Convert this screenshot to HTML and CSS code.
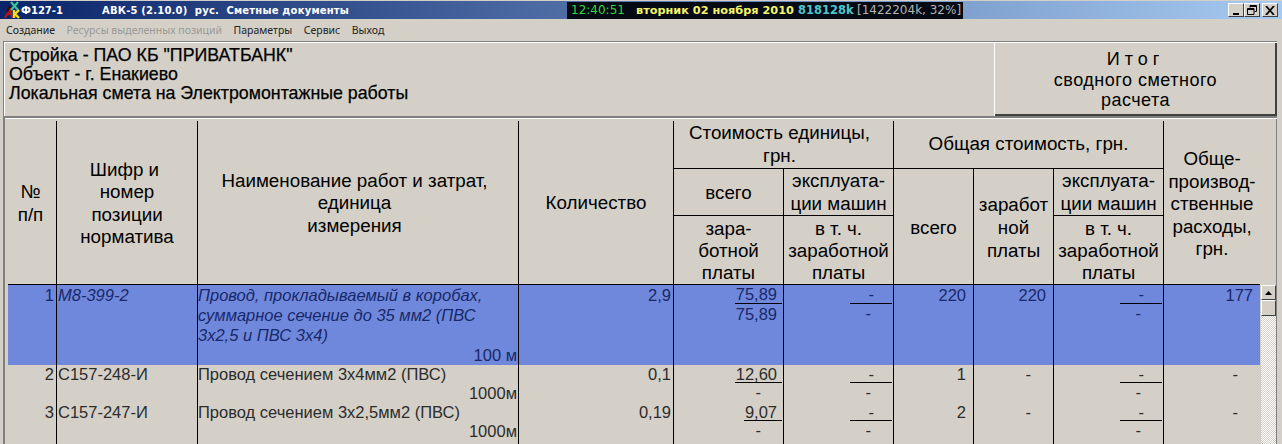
FILE: index.html
```html
<!DOCTYPE html>
<html lang="ru">
<head>
<meta charset="utf-8">
<title>АВК-5 Сметные документы</title>
<link rel="stylesheet" href="styles.css">
</head>
<body>
<div class="window">
  <header class="titlebar">
    <svg class="logo" width="17" height="18" viewBox="0 0 17 18">
      <path d="M1 17 L6 7 L8 7 L10 17 L8 17 L7.500 14 L5 14 L3 17 Z" fill="#b01818"/>
      <path d="M4 11 L7 5" stroke="#3a0a0a" stroke-width="2"/>
      <path d="M8 1 L15 9 M15 1 L8 9" stroke="#35c59a" stroke-width="2.200"/>
      <path d="M11 9 V17 M16 9 L12 13 L16 17" fill="none" stroke="#f5dc1e" stroke-width="2.400"/>
    </svg>
    <span class="form-id">Ф127-1</span>
    <span class="app-name">АВК-5 (2.10.0)&nbsp; рус.&nbsp; Сметные документы</span>
    <div class="clock">
      <span class="clock-time">12:40:51</span>
      <span class="clock-date">вторник 02 ноября 2010</span>
      <span class="clock-mem">818128k</span>
      <span class="clock-total">[1422204k, 32%]</span>
    </div>
    <div class="winbtns">
      <div class="winbtn">
        <svg width="9" height="9" viewBox="0 0 9 9"><path d="M1 7h6v2H1z" fill="#000"/></svg>
      </div>
      <div class="winbtn">
        <svg width="10" height="10" viewBox="0 0 10 10"><path d="M3 .5h6.5v6H7.5M3 .5v2M3 1.5h6.5M.5 3.5h6.500v6H.5zM.5 4.500h6.500" fill="none" stroke="#000"/></svg>
      </div>
      <div class="winbtn winbtn-close">
        <svg width="10" height="9" viewBox="0 0 10 9"><path d="M1 0l8 9M9 0L1 9" stroke="#000" stroke-width="1.800"/></svg>
      </div>
    </div>
  </header>

  <nav class="menu">
    <span class="menu-item">Создание</span>
    <span class="menu-item menu-disabled">Ресурсы выделенных позиций</span>
    <span class="menu-item">Параметры</span>
    <span class="menu-item">Сервис</span>
    <span class="menu-item">Выход</span>
  </nav>

  <section class="info">
    <div class="info-text">
      <div>Стройка - ПАО КБ "ПРИВАТБАНК"</div>
      <div>Объект - г. Енакиево</div>
      <div>Локальная смета на Электромонтажные работы</div>
    </div>
    <button class="total-btn" type="button">
      <span class="total-head">Итог</span>
      <span>сводного сметного</span>
      <span>расчета</span>
    </button>
  </section>

  <section class="frame">
    <table class="sheet">
      <colgroup>
        <col class="c1"><col class="c2"><col class="c3"><col class="c4"><col class="c5">
        <col class="c6"><col class="c7"><col class="c8"><col class="c9"><col class="c10">
      </colgroup>
      <thead>
        <tr class="h-a">
          <th rowspan="3" class="tall th-num">№<br>п/п</th>
          <th rowspan="3" class="tall">Шифр и&nbsp;<br>номер<br>позиции<br>норматива</th>
          <th rowspan="3" class="tall th-name">Наименование работ и затрат,<br>единица<br>измерения</th>
          <th rowspan="3" class="tall">Количество</th>
          <th colspan="2" class="th-unit">Стоимость единицы,<br>грн.</th>
          <th colspan="3">Общая стоимость, грн.</th>
          <th rowspan="3" class="last th-over">Обще-<br>производ-<br>ственные<br>расходы,<br>грн.</th>
        </tr>
        <tr class="h-b">
          <th>всего</th>
          <th>эксплуата-<br>ции машин</th>
          <th rowspan="2" class="tall">всего</th>
          <th rowspan="2" class="tall">заработ<br>ной<br>платы</th>
          <th>эксплуата-<br>ции машин</th>
        </tr>
        <tr class="h-c">
          <th>зара-<br>ботной<br>платы</th>
          <th>в т. ч.<br>заработной<br>платы</th>
          <th>в т. ч.<br>заработной<br>платы</th>
        </tr>
      </thead>
      <tbody>
        <tr class="row-sel">
          <td class="num">1</td>
          <td class="code">М8-399-2</td>
          <td class="name">Провод, прокладываемый в коробах, суммарное сечение до 35 мм2 (ПВС 3х2,5 и ПВС 3х4)<div class="unit">100 м</div></td>
          <td class="qty">2,9</td>
          <td><div class="frac"><span class="frac-top">75,89</span><span class="frac-bot">75,89</span></div></td>
          <td><div class="frac"><span class="frac-top frac-dash">-</span><span class="frac-bot-dash">-</span></div></td>
          <td class="val">220</td>
          <td class="val">220</td>
          <td><div class="frac"><span class="frac-top frac-dash">-</span><span class="frac-bot-dash">-</span></div></td>
          <td class="val last">177</td>
        </tr>
        <tr class="row">
          <td class="num">2</td>
          <td class="code">С157-248-И</td>
          <td class="name">Провод сечением 3х4мм2 (ПВС)<div class="unit">1000м</div></td>
          <td class="qty">0,1</td>
          <td><div class="frac"><span class="frac-top">12,60</span><span class="frac-bot-dash">-</span></div></td>
          <td><div class="frac"><span class="frac-top frac-dash">-</span><span class="frac-bot-dash">-</span></div></td>
          <td class="val">1</td>
          <td class="dash">-</td>
          <td><div class="frac"><span class="frac-top frac-dash">-</span><span class="frac-bot-dash">-</span></div></td>
          <td class="dash last">-</td>
        </tr>
        <tr class="row">
          <td class="num">3</td>
          <td class="code">С157-247-И</td>
          <td class="name">Провод сечением 3х2,5мм2 (ПВС)<div class="unit">1000м</div></td>
          <td class="qty">0,19</td>
          <td><div class="frac"><span class="frac-top">9,07</span><span class="frac-bot-dash">-</span></div></td>
          <td><div class="frac"><span class="frac-top frac-dash">-</span><span class="frac-bot-dash">-</span></div></td>
          <td class="val">2</td>
          <td class="dash">-</td>
          <td><div class="frac"><span class="frac-top frac-dash">-</span><span class="frac-bot-dash">-</span></div></td>
          <td class="dash last">-</td>
        </tr>
        <tr class="row-fill">
          <td></td><td></td><td></td><td></td><td></td><td></td><td></td><td></td><td></td><td class="last"></td>
        </tr>
      </tbody>
    </table>
    <div class="scrollbar">
      <div class="sb-arrow">
        <svg width="7" height="4" viewBox="0 0 7 4"><path d="M3.500 0L7 4H0z" fill="#000"/></svg>
      </div>
      <div class="sb-thumb"></div>
    </div>
  </section>
</div>
</body>
</html>
```

FILE: styles.css
```css
* { box-sizing: border-box; }
html, body { margin: 0; padding: 0; }
body { background: #d4d0c8; overflow: hidden; }

.window {
  width: 1282px;
  height: 444px;
  overflow: hidden;
  background: #d4d0c8;
  font-family: "Liberation Sans", Arial, sans-serif;
  color: #000;
}

/* Title bar */
.titlebar {
  display: flex;
  align-items: center;
  height: 18px;
  margin-top: 1px;
  background: linear-gradient(90deg, #0a246a 0%, #a6caf0 100%);
  font-family: "DejaVu Sans", sans-serif;
  font-weight: bold;
  font-size: 10px;
  color: #fff;
  white-space: nowrap;
}
.logo { flex: none; margin-left: 3px; }
.form-id { width: 81px; margin-left: 1px; }
.app-name { width: 465px; letter-spacing: .2px; }
.clock {
  display: flex;
  align-items: center;
  width: 396px;
  height: 17px;
  padding-left: 4px;
  background: #030a14;
  font-size: 12px;
}
.clock-time { width: 65px; color: #2fd83c; font-weight: normal; }
.clock-date { width: 162px; color: #f4f46a; font-size: 11.300px; }
.clock-mem { width: 59px; color: #4fc4cc; font-size: 11.500px; }
.clock-total { color: #b4b4b4; font-weight: normal; }
.winbtns { display: flex; margin-left: auto; margin-right: 4px; }
.winbtn {
  display: flex;
  align-items: center;
  justify-content: center;
  width: 16px;
  height: 14px;
  background: #d4d0c8;
  border: 1px solid;
  border-color: #fff #404040 #404040 #fff;
}
.winbtn-close { margin-left: 2px; }

/* Menu */
.menu {
  display: flex;
  align-items: center;
  gap: 11.500px;
  height: 22px;
  padding-left: 6px;
  font-family: "Noto Sans", sans-serif;
  font-size: 10.500px;
  color: #222;
}
.menu-disabled { color: #9a9a96; }

/* Info panel */
.info {
  display: flex;
  height: 75px;
  margin: 0 5px 0 3px;
  border-top: 1px solid #808080;
  border-left: 1px solid #808080;
  box-shadow: inset 0 1px 0 #fff, inset 1px 0 0 #fff;
}
.info-text {
  flex: 1;
  padding: 4px 0 0 5px;
  font-size: 17.800px;
  line-height: 19px;
  -webkit-text-stroke: .25px #000;
}
.total-btn {
  display: flex;
  flex-direction: column;
  align-items: center;
  justify-content: center;
  width: 283px;
  height: 74px;
  padding: 2px 0 0;
  background: #d4d0c8;
  border: 0;
  box-shadow: inset 1px 1px 0 #fff, inset -2px -2px 0 #404040;
  font-family: "Liberation Sans", Arial, sans-serif;
  font-size: 18px;
  line-height: 20.500px;
  letter-spacing: .5px;
  color: #000;
}
.total-head { letter-spacing: 5px; }

/* Table frame */
.frame {
  position: relative;
  height: 328px;
  margin: 0 5px 0 3px;
  padding: 3px 0 0 5px;
  border-top: 2px solid #808080;
  border-left: 2px solid #808080;
  box-shadow: inset 0 1px 0 #fff, inset -1px 0 0 #808080;
}
.sheet {
  table-layout: fixed;
  width: 1252px;
  margin-left: -2px;
  border-collapse: separate;
  border-spacing: 0;
}
.c1 { width: 49px; }
.c2 { width: 141px; }
.c3 { width: 321px; }
.c4 { width: 155px; }
.c5 { width: 110px; }
.c6 { width: 110px; }
.c7 { width: 80px; }
.c8 { width: 80px; }
.c9 { width: 110px; }
.c10 { width: 96px; }

.sheet th {
  padding: 0;
  border-right: 1px solid #000;
  border-bottom: 1px solid #000;
  font-weight: normal;
  font-size: 18.800px;
  line-height: 22.500px;
  text-align: center;
  vertical-align: middle;
  overflow: hidden;
}
.sheet .last { border-right: 0; }
.sheet .tall { padding-top: 2px; }
.sheet .th-num { padding-right: 3px; }
.sheet .th-name { padding-right: 7px; }
.sheet .th-unit { padding-right: 8px; }
.sheet .th-over { padding-top: 4px; }
.h-a { height: 48px; }
.h-b { height: 47px; }
.h-b th { line-height: 23px; }
.h-c { height: 69px; }
.h-c th { padding-top: 2px; line-height: 22px; }

.sheet td {
  padding: 0;
  border-right: 1px solid #000;
  vertical-align: top;
  font-size: 16.500px;
  line-height: 20px;
  color: #2c2c2c;
}
.row-sel { height: 80px; background: #6f88dc; }
.sheet .row-sel td { color: #18286a; }
.row { height: 38px; }
.sheet .row td { line-height: 19px; }
.row-fill { height: 20px; }

.num { padding-right: 2px !important; text-align: right; }
.code { padding-left: 1px !important; white-space: nowrap; }
.name { padding-right: 1px !important; }
.row-sel .code, .row-sel .name { font-style: italic; }
.unit { text-align: right; font-style: normal; }
.qty { padding-right: 2px !important; text-align: right; }
.val { padding-right: 7px !important; text-align: right; }
.dash { padding-right: 22px !important; text-align: right; }

.frac { display: flex; flex-direction: column; align-items: flex-end; padding-right: 1px; }
.frac-top {
  height: 18px;
  padding: 0 5px 0 1px;
  border-bottom: 1px solid #000;
  line-height: 19px;
}
.row-sel .frac-top { height: 19px; }
.frac-dash { width: 42px; padding-right: 18px; text-align: right; }
.frac-bot { padding-right: 5px; line-height: 20px; }
.frac-bot-dash { padding-right: 21px; line-height: 19px; }

/* Scrollbar */
.scrollbar {
  position: absolute;
  top: 167px;
  left: 1256px;
  width: 15px;
  height: 160px;
  background-color: #fff;
  background-image: conic-gradient(#d4d0c8 25%, #fff 0 50%, #d4d0c8 0 75%, #fff 0);
  background-size: 2px 2px;
}
.sb-arrow, .sb-thumb {
  background: #d4d0c8;
  border: 1px solid;
  border-color: #fff #404040 #404040 #fff;
}
.sb-arrow {
  display: flex;
  align-items: center;
  justify-content: center;
  height: 15px;
}
.sb-thumb { height: 16px; }
```
